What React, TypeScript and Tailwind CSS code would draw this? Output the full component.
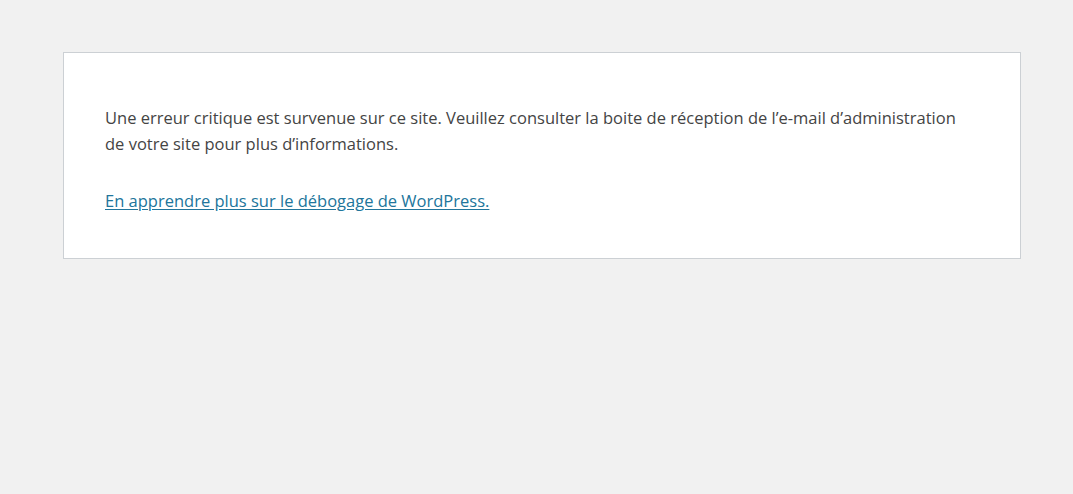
export default function App() {
  return (
    <div className="min-h-screen bg-[#f1f1f1] pt-[52px] font-['Open_Sans',sans-serif] text-[#444]">
      <div className="ml-[63px] w-[958px] border border-[#ccd0d4] bg-white pl-[41px] pr-[46px] pt-[52px] pb-[44px]">
        <p className="text-[16.5px] leading-[26px]">
          Une erreur critique est survenue sur ce site. Veuillez consulter la boite de réception de l’e-mail
          d’administration de votre site pour plus d’informations.
        </p>
        <p className="mt-[31px] text-[16.5px] leading-[26px]">
          <a href="#" className="text-[#21759b] underline underline-offset-2">
            En apprendre plus sur le débogage de WordPress.
          </a>
        </p>
      </div>
    </div>
  );
}
